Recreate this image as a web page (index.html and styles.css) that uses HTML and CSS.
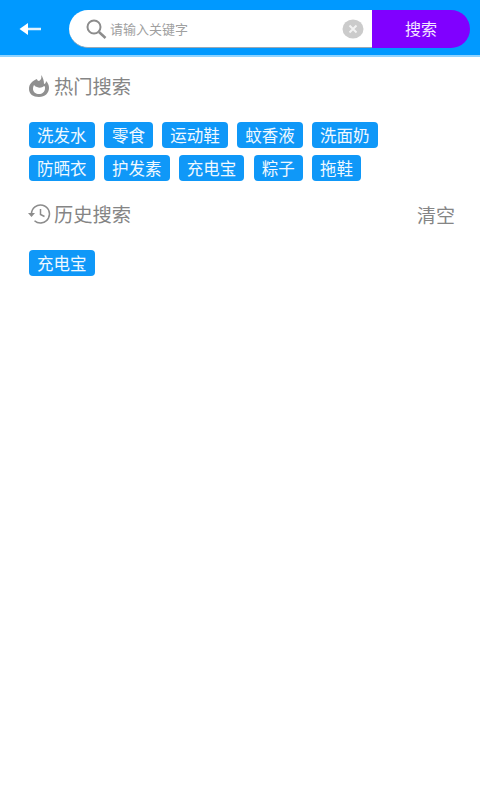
FILE: index.html
```html
<!DOCTYPE html>
<html lang="zh">
<head>
<meta charset="utf-8">
<title>搜索</title>
<link rel="stylesheet" href="styles.css">
</head>
<body>
<header class="topbar">
  <svg class="back" viewBox="0 0 22 14" width="22" height="14"><path d="M8 7h14" fill="none" stroke="#dff2ff" stroke-width="2.500"/><path d="M0.500 7 9 1v12Z" fill="#fff"/></svg>
  <div class="search">
    <div class="field">
      <svg class="lens" viewBox="0 0 22 22" width="22" height="22"><circle cx="9" cy="9" r="6.500" fill="none" stroke="#8c8c8c" stroke-width="2"/><path d="m14 14 6.500 6" fill="none" stroke="#8c8c8c" stroke-width="2.500"/></svg>
      <span class="placeholder">请输入关键字</span>
      <svg class="clear" viewBox="0 0 22 22" width="22" height="22"><ellipse cx="11" cy="11" rx="10.500" ry="9.500" fill="#cbcbcb"/><path d="m7.500 7.500 7 7M14.500 7.500l-7 7" stroke="#f2f2f2" stroke-width="2"/></svg>
    </div>
    <div class="submit">搜索</div>
  </div>
</header>
<main class="content">
  <section class="hot">
    <div class="heading">
      <svg class="hot-icon" viewBox="0 0 22 24" width="22" height="24"><path d="M13 1c1 3 0 5-2 6-1 0-2-1-2-2C4 7 1 10 1 15c0 5 4 8 10 8s10-4 10-9c0-3-1-5-3-7 0 2-1 3-2 3 0-3-1-7-3-9Z" fill="#909090"/><path d="M6 11c-1 2-1 3-1 4 0 3 3 5 6 5s6-2 6-6c0-1 0-2-1-2-2 2-5 2-7 1-1 0-2-1-3-2Z" fill="#fff"/></svg>
      <h2 class="title">热门搜索</h2>
    </div>
    <div class="tags">
      <span class="tag">洗发水</span>
      <span class="tag">零食</span>
      <span class="tag">运动鞋</span>
      <span class="tag">蚊香液</span>
      <span class="tag">洗面奶</span>
      <span class="tag">防晒衣</span>
      <span class="tag">护发素</span>
      <span class="tag">充电宝</span>
      <span class="tag">粽子</span>
      <span class="tag">拖鞋</span>
    </div>
  </section>
  <section class="history">
    <div class="heading">
      <svg class="history-icon" viewBox="0 0 26 22" width="26" height="22"><path d="M4.500 11a9 9 0 1 1 3 6.700" fill="none" stroke="#8c8c8c" stroke-width="1.500"/><path d="M1 10h7l-3.500 4Z" fill="#8c8c8c"/><path d="M13.500 6v5.500l4 2" fill="none" stroke="#8c8c8c" stroke-width="1.500"/></svg>
      <h2 class="title">历史搜索</h2>
      <span class="clear-all">清空</span>
    </div>
    <div class="tags">
      <span class="tag">充电宝</span>
    </div>
  </section>
</main>
</body>
</html>
```
FILE: styles.css
```css
* { box-sizing: border-box; }
html, body { margin: 0; height: 100%; background: #fff; }
body { font-family: "Noto Sans CJK SC", "Liberation Sans", sans-serif; }
.topbar {
  display: flex;
  align-items: center;
  height: 57px;
  padding: 3px 10px 0 19px;
  background: #0099ff;
  border-bottom: 2px solid #8fd3ff;
}
.back { flex: none; margin-right: 28px; }
.search { flex: 1; display: flex; height: 38px; }
.field {
  flex: 1;
  display: flex;
  align-items: center;
  padding: 0 8px 0 16px;
  background: #fff;
  border-radius: 19px 0 0 19px;
  border-bottom: 1px solid #9aa8b5;
}
.lens { flex: none; margin-right: 3px; }
.placeholder { flex: 1; font-size: 13px; color: #a0a0a0; }
.clear { flex: none; }
.submit {
  flex: none;
  width: 98px;
  display: flex;
  align-items: center;
  justify-content: center;
  padding-bottom: 2px;
  background: #8000ff;
  border-radius: 0 19px 19px 0;
  color: #f4e6ff;
  font-size: 16px;
}
.content { padding: 0 25px 0 29px; }
.heading { display: flex; align-items: center; height: 26px; }
.hot { padding-top: 16px; }
.hot-icon { flex: none; margin: 0 4px 0 -1px; }
.history { padding-top: 20px; }
.history-icon { flex: none; margin: 0 1px 0 -2px; }
.title { margin: 0; font-size: 19.300px; font-weight: 400; color: #858585; }
.clear-all { margin-left: auto; font-size: 19px; color: #858585; }
.tags { display: flex; flex-wrap: wrap; gap: 7px 9.200px; margin-top: 23px; max-width: 352px; }
.tag {
  display: flex;
  align-items: center;
  height: 26px;
  padding: 0 8.100px;
  border-radius: 4px;
  background: #0f98f8;
  color: #f0f8ff;
  font-size: 16.500px;
  white-space: nowrap;
}
```
